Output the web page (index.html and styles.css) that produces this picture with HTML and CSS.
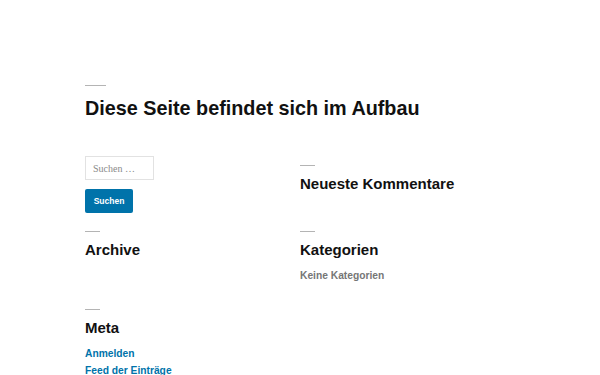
FILE: index.html
```html
<!DOCTYPE html>
<html lang="de">
<head>
    <meta charset="UTF-8">
    <meta name="viewport" content="width=device-width, initial-scale=1.0">
    <title>Diese Seite befindet sich im Aufbau</title>
    <link rel="stylesheet" href="styles.css">
</head>
<body>
    <div class="site">
        <h1 class="page-title">Diese Seite befindet sich im Aufbau</h1>

        <div class="widgets">
            <div class="widget widget-search">
                <form class="search-form" onsubmit="event.preventDefault()">
                    <input type="search" class="search-field" placeholder="Suchen &hellip;">
                    <button class="search-submit">Suchen</button>
                </form>
            </div>
            <div class="widget">
                <h2 class="widget-title">Neueste Kommentare</h2>
            </div>
            <div class="widget">
                <h2 class="widget-title">Archive</h2>
            </div>
            <div class="widget">
                <h2 class="widget-title">Kategorien</h2>
                <ul class="widget-list">
                    <li class="muted">Keine Kategorien</li>
                </ul>
            </div>
            <div class="widget">
                <h2 class="widget-title">Meta</h2>
                <ul class="widget-list">
                    <li><a href="#">Anmelden</a></li>
                    <li><a href="#">Feed der Einträge</a></li>
                </ul>
            </div>
        </div>
    </div>
</body>
</html>
```

FILE: styles.css
```css
body {
    margin: 0;
    background: #fff;
    color: #111;
    font-family: "Liberation Sans", Arial, sans-serif;
}

.site {
    padding: 85px 85px 0;
}

.page-title {
    margin: 0;
    font-size: 19.8px;
    line-height: 24px;
    font-weight: bold;
}

.page-title::before,
.widget-title::before {
    content: "";
    display: block;
    height: 1px;
    background: #b4b4b4;
}

.page-title::before {
    width: 21px;
    margin-bottom: 10px;
}

.widgets {
    display: grid;
    grid-template-columns: 215px 215px;
    row-gap: 9px;
    align-items: start;
    margin-top: 36px;
}

.widget-title {
    margin: 9px 0 0;
    font-size: 15px;
    line-height: 18px;
    font-weight: bold;
}

.widget-title::before {
    width: 15px;
    margin-bottom: 9px;
}

.widget-list {
    list-style: none;
    margin: 8px 0 7px;
    padding: 0;
    font-size: 10.25px;
    line-height: 17px;
    font-weight: bold;
}

.widget-list a {
    color: #0073aa;
    text-decoration: none;
}

.muted {
    color: #767676;
}

.search-field {
    display: block;
    box-sizing: border-box;
    width: 69px;
    height: 24px;
    margin: 0;
    padding: 0 7px;
    border: 1px solid #e2e2e2;
    border-radius: 0;
    font-family: "Liberation Serif", "Times New Roman", serif;
    font-size: 10px;
    color: #111;
    background: #fff;
}

.search-field::placeholder {
    color: #8a8a8a;
}

.search-submit {
    display: block;
    width: 48px;
    height: 24px;
    margin-top: 9px;
    padding: 0;
    border: none;
    border-radius: 2px;
    background: #0073aa;
    color: #fff;
    font-family: "Liberation Sans", Arial, sans-serif;
    font-size: 8.5px;
    font-weight: bold;
}
```
